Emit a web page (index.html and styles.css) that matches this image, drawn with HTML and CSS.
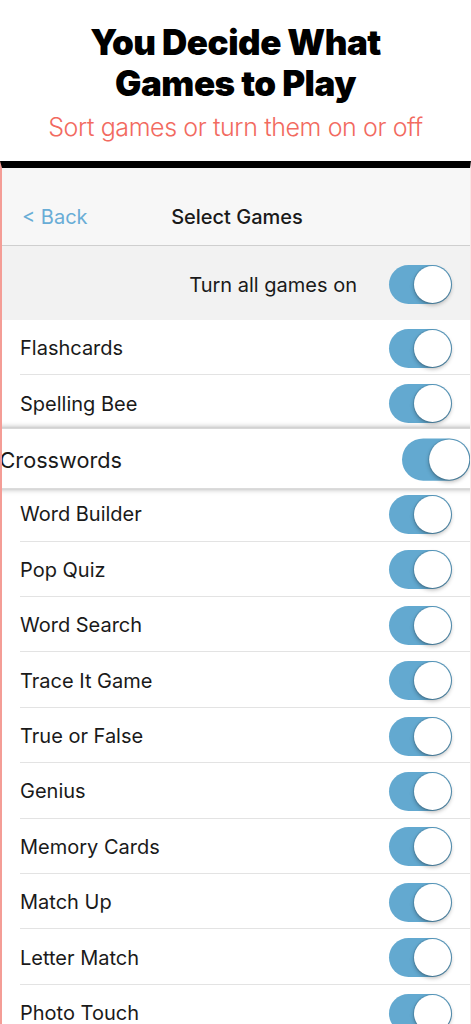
FILE: index.html
```html
<!DOCTYPE html>
<html lang="en">
<head>
    <meta charset="UTF-8">
    <meta name="viewport" content="width=device-width, initial-scale=1.0">
    <title>Select Games</title>
    <link rel="stylesheet" href="styles.css">
</head>
<body>
    <div class="promo">
        <h1>You Decide What<br>Games to Play</h1>
        <p class="tagline">Sort games or turn them on or off</p>
    </div>
    <div class="screen">
        <div class="navbar">
            <span class="back">&lt; Back</span>
            <span class="nav-title">Select Games</span>
        </div>
        <div class="all-row">
            <span>Turn all games on</span>
            <span class="switch"><span class="knob"></span></span>
        </div>
        <ul class="games">
            <li><span class="name">Flashcards</span><span class="switch"><span class="knob"></span></span></li>
            <li><span class="name">Spelling Bee</span><span class="switch"><span class="knob"></span></span></li>
            <li class="dragging"><span class="name">Crosswords</span><span class="switch"><span class="knob"></span></span></li>
            <li><span class="name">Word Builder</span><span class="switch"><span class="knob"></span></span></li>
            <li><span class="name">Pop Quiz</span><span class="switch"><span class="knob"></span></span></li>
            <li><span class="name">Word Search</span><span class="switch"><span class="knob"></span></span></li>
            <li><span class="name">Trace It Game</span><span class="switch"><span class="knob"></span></span></li>
            <li><span class="name">True or False</span><span class="switch"><span class="knob"></span></span></li>
            <li><span class="name">Genius</span><span class="switch"><span class="knob"></span></span></li>
            <li><span class="name">Memory Cards</span><span class="switch"><span class="knob"></span></span></li>
            <li><span class="name">Match Up</span><span class="switch"><span class="knob"></span></span></li>
            <li><span class="name">Letter Match</span><span class="switch"><span class="knob"></span></span></li>
            <li><span class="name">Photo Touch</span><span class="switch"><span class="knob"></span></span></li>
        </ul>
    </div>
</body>
</html>
```

FILE: styles.css
```css
body {
    margin: 0;
    width: 471px;
    height: 1024px;
    overflow: hidden;
    background-color: #ffffff;
    font-family: Inter, "Liberation Sans", sans-serif;
}
.promo {
    text-align: center;
    padding-top: 22px;
    height: 161px;
    box-sizing: border-box;
}
.promo h1 {
    margin: 0;
    font-size: 35px;
    line-height: 41px;
    font-weight: 900;
    letter-spacing: -0.5px;
    color: #000;
}
.tagline {
    margin: 8px 0 0 0;
    font-size: 25px;
    line-height: 30px;
    font-weight: 300;
    letter-spacing: -0.4px;
    color: #f26a60;
}
.screen {
    border-top: 7px solid #000;
    border-left: 2px solid #f49d96;
    border-right: 1px solid #fbe6e6;
    height: 856px;
    overflow: hidden;
    background-color: #fff;
}
.navbar {
    height: 78px;
    box-sizing: border-box;
    padding-top: 21px;
    background-color: #f7f7f7;
    border-bottom: 1px solid #cfcfcf;
    position: relative;
    display: flex;
    align-items: center;
    justify-content: center;
}
.back {
    position: absolute;
    left: 20px;
    top: 21px;
    line-height: 56px;
    font-size: 20px;
    color: #69add6;
}
.nav-title {
    font-size: 20px;
    font-weight: 500;
    color: #1a1a1a;
    margin-left: 2px;
}
.all-row {
    height: 74px;
    box-sizing: border-box;
    padding-top: 3px;
    background-color: #f2f2f2;
    display: flex;
    align-items: center;
    justify-content: flex-end;
    gap: 32px;
    padding-right: 18px;
    font-size: 20px;
    color: #1a1a1a;
}
.games {
    list-style: none;
    margin: 0;
    padding: 0;
}
.games li {
    height: 55.42px;
    box-sizing: border-box;
    margin-left: 18px;
    padding-right: 18px;
    padding-top: 2px;
    border-bottom: 1px solid #e3e3e3;
    display: flex;
    align-items: center;
    justify-content: space-between;
    font-size: 20px;
    color: #1a1a1a;
    background-color: #fff;
}
.games li.dragging {
    margin-left: 0;
    padding-left: 16px;
    border-bottom: none;
    transform: scale(1.085);
    box-shadow: 0 0 6px rgba(0, 0, 0, 0.5);
    position: relative;
    z-index: 2;
}
.switch {
    width: 63px;
    height: 39px;
    border-radius: 20px;
    background-color: #63a9d0;
    position: relative;
    flex-shrink: 0;
}
.knob {
    position: absolute;
    right: 1px;
    top: 1px;
    width: 37px;
    height: 37px;
    border-radius: 50%;
    background-color: #fff;
    box-shadow: 0 2px 4px rgba(0, 0, 0, 0.3), 0 0 0 1px rgba(60, 110, 140, 0.25);
}
```
